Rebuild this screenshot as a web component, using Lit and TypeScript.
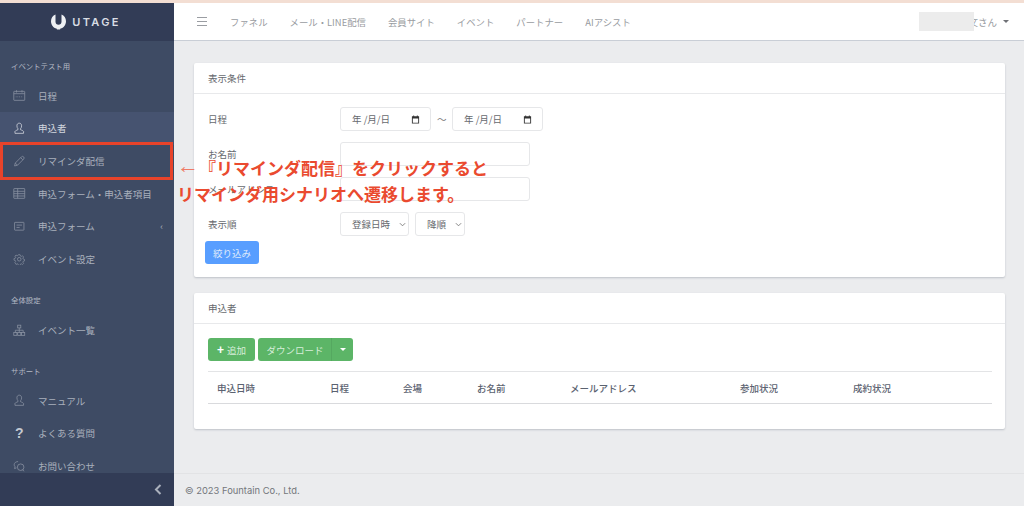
import { LitElement, html, css, svg } from 'lit';
import { customElement } from 'lit/decorators.js';

const stroke = (body: unknown, cls = 'ico') => html`<svg class=${cls} viewBox="0 0 16 16" fill="none" stroke="currentColor" stroke-width="1">${body}</svg>`;

const icons: Record<string, unknown> = {
  calendar: stroke(svg`<rect x="1" y="3" width="14" height="11.500" rx=".5"/><path d="M1 6h14M4.500 1.500v3M11.500 1.500v3"/><path d="M3.500 10h9" stroke-dasharray="1 1.200"/>`),
  user: stroke(svg`<path d="M8 1.500c-2 0-3 1.500-3 3.400 0 1.600.6 3 1.400 3.800v1.100c-1.600.7-3.400 1.400-3.900 2.200v2.500h11V12c-.5-.8-2.300-1.500-3.900-2.200V8.700c.8-.8 1.400-2.200 1.400-3.800 0-1.900-1-3.400-3-3.400z"/>`),
  pencil: stroke(svg`<path d="M2 14l.9-3.700L10.800 2.400a1.500 1.500 0 0 1 2.800 2.800L5.700 13.100z"/><path d="M9.800 3.400l2.800 2.800M2.900 10.300l2.800 2.800"/>`),
  table: stroke(svg`<rect x="1" y="2" width="14" height="12.500" rx=".5"/><path d="M1 5.500h14M1 8.500h14M1 11.500h14M6 2v12.500"/>`),
  form: stroke(svg`<rect x="2" y="3" width="12" height="10" rx=".5"/><path d="M4.500 6.500h7M4.500 9.500h4"/>`),
  gear: stroke(svg`<circle cx="8" cy="8" r="2.300"/><path d="M6.800 1.500h2.400l.4 1.900 1.300.6 1.700-1 1.600 1.800-1.100 1.600.5 1.300 1.900.5v2.200l-1.900.5-.5 1.300 1.100 1.600-1.600 1.600-1.700-1-1.300.6-.4 1.900H6.800l-.4-1.900-1.300-.6-1.700 1L1.800 12.700l1.100-1.600-.5-1.300L.5 9.300V7l1.900-.5.5-1.300-1.100-1.600L3.400 2l1.700 1 1.300-.6z" transform="translate(.8 .8) scale(.9)"/>`),
  org: stroke(svg`<rect x="6" y="1.500" width="4" height="3.500"/><rect x="1" y="11" width="4" height="3.500"/><rect x="6" y="11" width="4" height="3.500"/><rect x="11" y="11" width="4" height="3.500"/><path d="M8 5v6M3 11V8h10v3"/>`),
  question: html`<span class="qmark">?</span>`,
  chat: stroke(svg`<path d="M6.500 2C3.800 2 1.500 3.700 1.500 6c0 1 .4 1.900 1.100 2.600L2 11l2.400-1"/><circle cx="9.800" cy="9.200" r="4.200"/><path d="M12.500 12.300l1.500 2.200"/>`),
};

const sections = [
  { label: 'イベントテスト用', items: [['calendar', '日程'], ['user', '申込者', 'active'], ['pencil', 'リマインダ配信'], ['table', '申込フォーム・申込者項目'], ['form', '申込フォーム', 'more'], ['gear', 'イベント設定']] },
  { label: '全体設定', items: [['org', 'イベント一覧']] },
  { label: 'サポート', items: [['user', 'マニュアル'], ['question', 'よくある質問'], ['chat', 'お問い合わせ']] },
];

const topNav = ['ファネル', 'メール・LINE配信', '会員サイト', 'イベント', 'パートナー', 'AIアシスト'];
const columns = ['申込日時', '日程', '会場', 'お名前', 'メールアドレス', '参加状況', '成約状況'];

const chevron = html`<svg class="chev" viewBox="0 0 8 5" fill="none" stroke="currentColor" stroke-width="1"><path d="M1 1l3 3 3-3"/></svg>`;
const dateField = html`<div class="field date"><span>年 /月/日</span>
  <svg class="cal" viewBox="0 0 10 10"><path fill="#333" d="M1 1.500h1.500V.5h1v1h3V.5h1v1H9V9.500H1zM2 3.800V8.500h6V3.800z"/></svg></div>`;

@customElement('app-root')
export class AppRoot extends LitElement {
  static styles = css`
    :host {
      display: block;
      position: relative;
      width: 1024px;
      height: 506px;
      overflow: hidden;
      background: #ebecee;
      font-family: "Noto Sans CJK JP", "Noto Sans", sans-serif;
      font-size: 9.5px;
      color: #66696e;
    }
    .strip { height: 3px; background: #f3ded3; }
    .shell { display: flex; height: 503px; }

    .side { width: 174px; flex: none; display: flex; flex-direction: column; background: #3e4b64; color: #a9b0bc; }
    .brand { height: 38px; flex: none; background: #323c56; display: flex; align-items: center; justify-content: center; gap: 6px; padding-right: 2px; }
    .brand svg { width: 15px; height: 16px; }
    .brand span { font-family: "Inter", sans-serif; font-weight: 600; font-size: 11px; letter-spacing: 2.300px; color: #d9dde4; }
    .nav { flex: 1; min-height: 0; overflow: hidden; }
    .label { height: 38.200px; box-sizing: border-box; display: flex; align-items: flex-end; padding: 0 0 7.500px 11px; font-size: 7.400px; line-height: 12px; color: #b4bac5; }
    .item { height: 32.700px; display: flex; align-items: center; padding-left: 13px; }
    .item.active { background: #465370; color: #d3d7df; }
    .item .ico { width: 12.500px; height: 12.500px; margin-right: 12.500px; flex: none; opacity: .7; }
    .item.active .ico { opacity: 1; }
    .qmark { width: 12.500px; margin-right: 12.500px; text-align: center; font: bold 14px "Liberation Sans", sans-serif; color: #c3c8d1; }
    .more { margin-left: auto; margin-right: 11px; font-size: 9px; }
    .side-foot { height: 33px; flex: none; background: #323c56; display: flex; align-items: center; justify-content: flex-end; padding-right: 12px; color: #aab0bc; }
    .side-foot svg { width: 8px; height: 11px; }

    .main { flex: 1; min-width: 0; display: flex; flex-direction: column; }
    .top { height: 38px; flex: none; box-sizing: border-box; background: #fff; border-bottom: 1px solid #c9ced6; display: flex; align-items: center; color: #999ca1; }
    .burger { width: 10px; height: 7px; margin: 0 23px 0 23px; border-top: 1px solid #9a9da2; border-bottom: 1px solid #9a9da2; position: relative; }
    .burger::after { content: ""; position: absolute; left: 0; right: 0; top: 3px; height: 1px; background: #9a9da2; }
    .top-links { display: flex; gap: 22px; font-size: 9.400px; }
    .user { margin-left: auto; margin-right: 15px; display: flex; align-items: center; gap: 6px; }
    .caret { width: 0; height: 0; border: 3px solid transparent; border-top: 3.500px solid #6f7176; border-bottom: 0; }

    .content { flex: 1; min-height: 0; padding: 22px 19px 0 20px; display: flex; flex-direction: column; gap: 16px; }
    .card { background: #fff; border-radius: 2px; box-shadow: 0 1px 2px rgba(60, 70, 90, .25); }
    .card-head { height: 31px; box-sizing: border-box; display: flex; align-items: center; padding-left: 14px; border-bottom: 1px solid #e8e9eb; }
    .form { padding: 13px 0 13px 11px; display: flex; flex-direction: column; gap: 11px; }
    .row { display: flex; align-items: center; gap: 6px; height: 24px; padding-left: 3px; }
    .row label { width: 126px; }
    .field { box-sizing: border-box; height: 24px; background: #fff; border: 1px solid #e6e7e9; border-radius: 3px; display: flex; align-items: center; }
    .date { width: 91px; padding: 0 10px 0 11px; justify-content: space-between; }
    .cal { width: 9px; height: 9px; }
    .tilde { width: 9px; text-align: center; color: #777; }
    .text { width: 190px; }
    .sel { padding-left: 11px; justify-content: space-between; padding-right: 2px; }
    .sel-order { width: 69px; }
    .sel-dir { width: 50px; }
    .chev { width: 7px; height: 5px; color: #777; }
    .btn { box-sizing: border-box; height: 23px; display: flex; align-items: center; justify-content: center; border-radius: 3px; color: #dfeafb; }
    .blue { width: 54px; margin-top: -6px; background: #589eff; }
    .green { background: #5cb567; color: #d8eedb; }
    .body { padding: 14px 13px 25px 14px; }
    .actions { display: flex; gap: 3px; margin-bottom: 10px; }
    .add { width: 47px; gap: 3px; }
    .add b { font: bold 12px "Liberation Sans", sans-serif; color: #fff; }
    .dl { width: 95px; justify-content: flex-start; }
    .dl span:first-child { width: 73px; text-align: center; padding-left: 1px; box-sizing: border-box; }
    .dl .split { flex: 1; height: 100%; display: flex; align-items: center; justify-content: center; border-left: 1px solid #55a860; }
    .dl .caret { border-top-color: #fff; }
    .thead { display: grid; grid-template-columns: 113px 73px 74px 93px 170px 113px 1fr; height: 33px; box-sizing: border-box; align-items: center; padding-left: 9px; border-top: 1px solid #e3e4e6; border-bottom: 1px solid #d9dadd; font-weight: 500; color: #5b6270; }
    .foot { height: 33px; flex: none; box-sizing: border-box; border-top: 1px solid #e2e3e5; display: flex; align-items: center; padding-left: 11px; font-family: "Inter", sans-serif; font-size: 9.400px; color: #74777c; }

    .redact { position: absolute; left: 919px; top: 12px; width: 55px; height: 19px; background: #ececec; }
    .frame { position: absolute; left: 0; top: 142px; width: 173px; height: 38px; box-sizing: border-box; border: 3px solid #e8432a; }
    .note { position: absolute; left: 177px; top: 155px; font-size: 17px; line-height: 26px; font-weight: 700; color: #ea4a2f; white-space: nowrap; }
    .note .arrow { font: 400 22px/0 "Liberation Sans", sans-serif; color: #ef7a66; vertical-align: 2px; }
  `;

  render() {
    return html`
      <div class="strip"></div>
      <div class="shell">
        <aside class="side">
          <div class="brand">
            <svg viewBox="0 0 15 16"><path fill="#eef0f3" fill-rule="evenodd" d="M4.500.5v7.300c0 1.700 1.300 3 3 3s3-1.300 3-3V.5C13.200 1.500 15 4.100 15 7.200c0 3.600-2.400 6.600-5.500 7.400l-.5 1H6l-.5-1C2.400 13.800 0 10.800 0 7.200 0 4.100 1.800 1.500 4.500.5z"/></svg>
            <span>UTAGE</span>
          </div>
          <nav class="nav">
            ${sections.map(s => html`
              <div class="label">${s.label}</div>
              ${s.items.map(([icon, text, flag]) => html`
                <div class="item ${flag === 'active' ? 'active' : ''}">
                  ${icons[icon]}<span>${text}</span>
                  ${flag === 'more' ? html`<span class="more">‹</span>` : ''}
                </div>`)}
            `)}
          </nav>
          <div class="side-foot">
            <svg viewBox="0 0 8 11" fill="none" stroke="currentColor" stroke-width="2"><path d="M6.500 1 2 5.500 6.500 10"/></svg>
          </div>
        </aside>
        <div class="main">
          <header class="top">
            <div class="burger"></div>
            <div class="top-links">${topNav.map(t => html`<span>${t}</span>`)}</div>
            <div class="user"><span>文さん</span><i class="caret"></i></div>
          </header>
          <div class="content">
            <section class="card">
              <div class="card-head">表示条件</div>
              <div class="form">
                <div class="row"><label>日程</label>${dateField}<span class="tilde">〜</span>${dateField}</div>
                <div class="row"><label>お名前</label><div class="field text"></div></div>
                <div class="row"><label>メールアドレス</label><div class="field text"></div></div>
                <div class="row"><label>表示順</label>
                  <div class="field sel sel-order"><span>登録日時</span>${chevron}</div>
                  <div class="field sel sel-dir"><span>降順</span>${chevron}</div>
                </div>
                <div class="btn blue">絞り込み</div>
              </div>
            </section>
            <section class="card">
              <div class="card-head">申込者</div>
              <div class="body">
                <div class="actions">
                  <span class="btn green add"><b>+</b>追加</span>
                  <span class="btn green dl"><span>ダウンロード</span><span class="split"><i class="caret"></i></span></span>
                </div>
                <div class="thead">${columns.map(c => html`<span>${c}</span>`)}</div>
              </div>
            </section>
          </div>
          <footer class="foot">© 2023 Fountain Co., Ltd.</footer>
        </div>
      </div>
      <div class="redact"></div>
      <div class="frame"></div>
      <div class="note"><span class="arrow">←</span>『リマインダ配信』をクリックすると<br>リマインダ用シナリオへ遷移します。</div>
    `;
  }
}
